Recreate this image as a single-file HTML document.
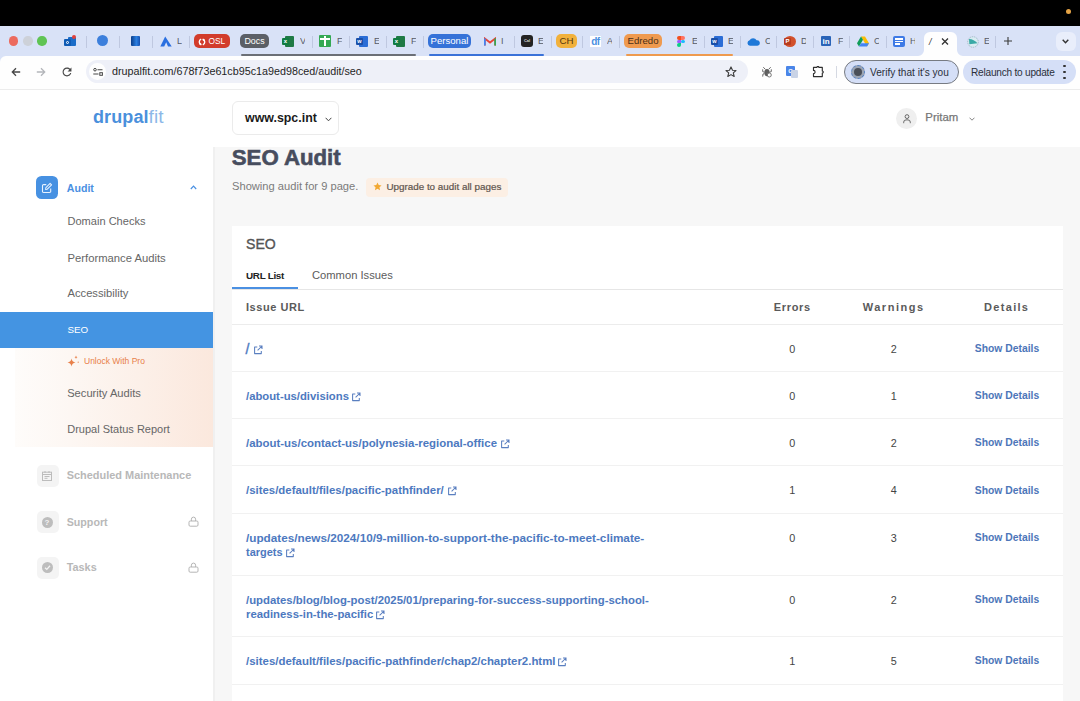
<!DOCTYPE html>
<html><head><meta charset="utf-8">
<style>
*{margin:0;padding:0;box-sizing:border-box}
html,body{width:1080px;height:701px;overflow:hidden;background:#f7f7f7;font-family:"Liberation Sans",sans-serif}
.a{position:absolute}
svg{display:block}
#topbar{left:0;top:0;width:1080px;height:26px;background:#000}
#tabs{left:0;top:26px;width:1080px;height:30px;background:#d9e2f7}
#toolbar{left:0;top:56px;width:1080px;height:33px;background:#fefefe}
#header{left:0;top:89px;width:1080px;height:58px;background:#fff;border-top:1.5px solid #ececec}
#sidebar{left:0;top:147px;width:213px;height:554px;background:#fff}
#main{left:213px;top:147px;width:867px;height:554px;background:#f7f7f7}
.tl{width:9.4px;height:9.4px;border-radius:50%;top:36.3px}
.sep{width:1px;top:36px;height:12px;background:#bfc8e0}
.pill{top:34px;height:14px;border-radius:5px;font-size:10px;line-height:14px;text-align:center;white-space:nowrap}
.tt{top:35px;font-size:9px;color:#555a66;line-height:13px;width:4.5px;overflow:hidden;white-space:nowrap}
.ul{top:54px;height:2px;border-radius:1px}
.si{left:67.5px;font-size:11.2px;line-height:14px;color:#666;white-space:nowrap}
.sd{left:66.7px;font-size:10.9px;line-height:14px;color:#b8b8b8;font-weight:700;white-space:nowrap}
.ib{left:36.5px;width:22px;height:22px;border-radius:5px;background:#f4f4f4}
</style></head><body>
<div id="topbar" class="a"></div>
<div class="a" style="left:1065.6px;top:8.6px;width:5.4px;height:5.4px;border-radius:50%;background:#e6a446"></div>
<div id="tabs" class="a"></div>
<!-- traffic lights -->
<div class="a tl" style="left:8.7px;background:#ec6a5e"></div>
<div class="a tl" style="left:23.3px;background:#cdd1d9"></div>
<div class="a tl" style="left:37.3px;background:#5fc454"></div>
<!-- outlook -->
<div class="a" style="left:64px;top:36px;width:12px;height:10px">
 <div class="a" style="left:4px;top:1px;width:8px;height:9px;background:#1a6cc8;border-radius:1px"></div>
 <div class="a" style="left:0;top:3px;width:7px;height:7px;background:#0f5bb5;border-radius:1px"></div>
 <div class="a" style="left:2px;top:5px;width:3px;height:3px;border:1px solid #fff;border-radius:50%"></div>
 <div class="a" style="left:8px;top:-1px;width:4px;height:4px;background:#e0403a;border-radius:50%"></div>
</div>
<div class="a sep" style="left:86px"></div>
<div class="a" style="left:97px;top:35px;width:11px;height:11px;border-radius:50%;background:#3c7fdc"></div>
<div class="a sep" style="left:119px"></div>
<div class="a" style="left:131px;top:36px;width:9px;height:10px;background:linear-gradient(90deg,#0a3d8a,#2a7ee0 60%,#1550b0);border-radius:1px"></div>
<div class="a sep" style="left:152px"></div>
<svg class="a" style="left:160px;top:36px" width="12" height="11" viewBox="0 0 12 11"><path d="M5.2 0.5 L0.3 10.5 L4.2 10.5 L6.2 6.3 L8 10.5 L11.7 10.5 Z" fill="#2a6fe0"/></svg>
<div class="a tt" style="left:177px">L</div>
<div class="a sep" style="left:189px"></div>
<div class="a pill" style="left:194px;width:36px;background:#d23c2b"></div><div class="a" style="left:208.5px;top:34px;font-size:8.4px;line-height:14px;color:#fff;white-space:nowrap">OSL</div>
<svg class="a" style="left:197.5px;top:37.5px" width="8" height="8" viewBox="0 0 8 8"><path d="M3.2 1.2 A3 3 0 0 0 3.2 6.8 M4.8 1.2 A3 3 0 0 1 4.8 6.8" stroke="#fff" stroke-width="1.4" fill="none"/><path d="M1 6.3 L3.5 7.2 L3 4.8 Z M7 1.7 L4.5 0.8 L5 3.2 Z" fill="#fff"/></svg>
<div class="a pill" style="left:240px;width:29px;background:#5b5f66;color:#fff;font-size:8.9px">Docs</div>
<!-- excel -->
<div class="a" style="left:282px;top:36px;width:12px;height:11px">
 <div class="a" style="left:3px;top:0;width:9px;height:11px;background:#1f7a45;border-radius:1px"></div>
 <div class="a" style="left:0;top:2px;width:7px;height:7px;background:#107c41;border-radius:1px;color:#fff;font-size:6px;line-height:7px;text-align:center;font-weight:700">x</div>
</div>
<div class="a tt" style="left:300px">V</div>
<div class="a sep" style="left:312px"></div>
<div class="a" style="left:319px;top:35px;width:12px;height:12px;background:#34a853;border-radius:1px">
 <div class="a" style="left:5px;top:1px;width:2px;height:10px;background:#fff"></div>
 <div class="a" style="left:1px;top:3px;width:10px;height:2px;background:#fff"></div>
</div>
<div class="a tt" style="left:337px">F</div>
<div class="a sep" style="left:349px"></div>
<!-- word -->
<div class="a" style="left:356px;top:36px;width:12px;height:11px">
 <div class="a" style="left:3px;top:0;width:9px;height:11px;background:#2b6dd6;border-radius:1px"></div>
 <div class="a" style="left:0;top:2px;width:7px;height:7px;background:#1a4fa8;border-radius:1px;color:#fff;font-size:5.5px;line-height:7px;text-align:center;font-weight:700">w</div>
</div>
<div class="a tt" style="left:374px">E</div>
<div class="a sep" style="left:386px"></div>
<div class="a" style="left:393px;top:36px;width:12px;height:11px">
 <div class="a" style="left:3px;top:0;width:9px;height:11px;background:#1f7a45;border-radius:1px"></div>
 <div class="a" style="left:0;top:2px;width:7px;height:7px;background:#107c41;border-radius:1px;color:#fff;font-size:6px;line-height:7px;text-align:center;font-weight:700">x</div>
</div>
<div class="a tt" style="left:411px">F</div>
<div class="a sep" style="left:423px"></div>
<div class="a pill" style="left:428px;width:43px;background:#3572d8;color:#fff;font-size:9.6px">Personal</div>
<!-- gmail -->
<svg class="a" style="left:484px;top:37px" width="12" height="9" viewBox="0 0 12 9"><path d="M0.8 8.5 V1.5 L6 5.5 L11.2 1.5 V8.5" stroke="#ea4335" stroke-width="1.8" fill="none"/><path d="M0.8 8.5 V1.5" stroke="#4285f4" stroke-width="1.8"/><path d="M11.2 8.5 V1.5" stroke="#34a853" stroke-width="1.8"/></svg>
<div class="a tt" style="left:501px">I</div>
<div class="a sep" style="left:514px"></div>
<div class="a" style="left:521px;top:35px;width:12px;height:12px;background:#232323;border-radius:3px;color:#ddd;font-size:4px;line-height:12px;text-align:center;font-weight:700">Cal</div>
<div class="a tt" style="left:538px">E</div>
<div class="a sep" style="left:551px"></div>
<div class="a pill" style="left:556px;width:21px;background:#f1b13c;color:#54380f;font-size:9.7px">CH</div>
<div class="a sep" style="left:582px"></div>
<div class="a" style="left:590px;top:36px;width:11px;height:11px;background:#fff;color:#4a90e2;font-size:10px;line-height:11px;font-weight:700;text-align:center;letter-spacing:-0.5px">df</div>
<div class="a tt" style="left:607px">A</div>
<div class="a sep" style="left:619px"></div>
<div class="a pill" style="left:624px;width:38px;background:#ef9a4f;color:#4a2f18;font-size:9.6px">Edredo</div>
<!-- figma -->
<div class="a" style="left:677px;top:36px;width:8px;height:11px">
 <div class="a" style="left:0;top:0;width:4px;height:3.6px;background:#f24e1e;border-radius:2px 0 0 2px"></div>
 <div class="a" style="left:4px;top:0;width:4px;height:3.6px;background:#ff7262;border-radius:0 2px 2px 0"></div>
 <div class="a" style="left:0;top:3.6px;width:4px;height:3.6px;background:#a259ff;border-radius:2px 0 0 2px"></div>
 <div class="a" style="left:4px;top:3.6px;width:4px;height:3.6px;background:#1abcfe;border-radius:50%"></div>
 <div class="a" style="left:0;top:7.2px;width:4px;height:3.8px;background:#0acf83;border-radius:2px 0 2px 2px"></div>
</div>
<div class="a tt" style="left:692px">E</div>
<div class="a sep" style="left:704px"></div>
<div class="a" style="left:711px;top:36px;width:12px;height:11px">
 <div class="a" style="left:3px;top:0;width:9px;height:11px;background:#2b6dd6;border-radius:1px"></div>
 <div class="a" style="left:0;top:2px;width:7px;height:7px;background:#1a4fa8;border-radius:1px;color:#fff;font-size:5.5px;line-height:7px;text-align:center;font-weight:700">w</div>
</div>
<div class="a tt" style="left:728px">E</div>
<div class="a sep" style="left:740px"></div>
<svg class="a" style="left:747px;top:38px" width="13" height="8" viewBox="0 0 13 8"><path d="M3 7.8 A2.8 2.8 0 0 1 2.6 2.3 A4 4 0 0 1 9.6 2.2 A2.8 2.8 0 0 1 10.4 7.8 Z" fill="#1e78d8"/></svg>
<div class="a tt" style="left:765px">C</div>
<div class="a sep" style="left:776px"></div>
<div class="a" style="left:784px;top:36px;width:12px;height:11px;border-radius:50%;background:#d2502b"></div>
<div class="a" style="left:784px;top:38px;width:7px;height:7px;background:#b83c1e;border-radius:1px;color:#fff;font-size:6px;line-height:7px;font-weight:700;text-align:center">P</div>
<div class="a tt" style="left:801px">D</div>
<div class="a sep" style="left:813px"></div>
<div class="a" style="left:821px;top:36px;width:10px;height:10px;background:#2a64b8;border-radius:1px;color:#fff;font-size:8px;line-height:11px;font-weight:700;text-align:center">in</div>
<div class="a tt" style="left:838px">F</div>
<div class="a sep" style="left:849px"></div>
<svg class="a" style="left:857px;top:36px" width="12" height="11" viewBox="0 0 12 11"><path d="M4 0.5 H8 L12 7.3 L10 10.5 Z" fill="#fbbc04"/><path d="M4 0.5 L0 7.3 L2 10.5 L6 3.7 Z" fill="#0f9d58"/><path d="M2 10.5 H10 L12 7.3 H4 Z" fill="#4285f4"/></svg>
<div class="a tt" style="left:874px">C</div>
<div class="a sep" style="left:886px"></div>
<div class="a" style="left:893px;top:36px;width:12px;height:11px;background:#3e7ae6;border-radius:2px">
 <div class="a" style="left:2px;top:2px;width:8px;height:1.5px;background:#fff"></div>
 <div class="a" style="left:2px;top:4.7px;width:8px;height:1.5px;background:#fff"></div>
 <div class="a" style="left:2px;top:7.4px;width:5px;height:1.5px;background:#fff"></div>
</div>
<div class="a tt" style="left:910px">H</div>
<!-- active tab -->
<svg class="a" style="left:918px;top:31px" width="45" height="25" viewBox="0 0 45 25"><path d="M0 25 A6 6 0 0 0 6 19 V7 A6 6 0 0 1 12 1 H33 A6 6 0 0 1 39 7 V19 A6 6 0 0 0 45 25 Z" fill="#fefefe"/></svg>
<div class="a" style="left:929px;top:37px;font-size:9px;color:#333;font-style:italic">/</div>
<svg class="a" style="left:941px;top:38px" width="8" height="7" viewBox="0 0 8 7"><path d="M1 0.5 L7 6.5 M7 0.5 L1 6.5" stroke="#333" stroke-width="1.3"/></svg>
<svg class="a" style="left:966.5px;top:35.5px" width="12" height="12" viewBox="0 0 12 12"><circle cx="6" cy="6" r="5.3" fill="#d9ecf2" stroke="#9ab0bf" stroke-width="0.8" stroke-dasharray="1.5 0.8"/><path d="M2 3 Q7 3.2 10.5 7.3 L2.3 8.2 Z" fill="#39a9a6"/></svg>
<div class="a tt" style="left:984px">E</div>
<div class="a sep" style="left:995px"></div>
<svg class="a" style="left:1003.5px;top:37px" width="8" height="8" viewBox="0 0 8 8"><path d="M4 0 V8 M0 4 H8" stroke="#3a3a3a" stroke-width="1.1"/></svg>
<div class="a" style="left:1056px;top:32px;width:20px;height:19px;border-radius:6px;background:#e9eefb"></div>
<svg class="a" style="left:1062px;top:39px" width="7" height="5" viewBox="0 0 7 5"><path d="M0.7 0.8 L3.5 3.8 L6.3 0.8" stroke="#333" stroke-width="1.4" fill="none"/></svg>
<!-- group underlines -->
<div class="a ul" style="left:241px;width:175px;background:#6b6f76"></div>
<div class="a ul" style="left:429px;width:115px;background:#3a72d8"></div>
<div class="a ul" style="left:626px;width:107px;background:#ee9a4e"></div>

<div id="toolbar" class="a"></div>
<svg class="a" style="left:0;top:56px" width="6" height="6" viewBox="0 0 6 6"><path d="M0 0 H6 A6 6 0 0 0 0 6 Z" fill="#d9e2f7"/></svg>
<svg class="a" style="left:11px;top:67px" width="10" height="10" viewBox="0 0 10 10"><path d="M9.2 5 H1.5 M5 1.3 L1.3 5 L5 8.7" stroke="#474747" stroke-width="1.3" fill="none"/></svg>
<svg class="a" style="left:36px;top:67px" width="10" height="10" viewBox="0 0 10 10"><path d="M0.8 5 H8.5 M5 1.3 L8.7 5 L5 8.7" stroke="#b4b6ba" stroke-width="1.3" fill="none"/></svg>
<svg class="a" style="left:62px;top:67px" width="10" height="10" viewBox="3 3 18 18"><path d="M17.65 6.35C16.2 4.9 14.21 4 12 4c-4.42 0-7.99 3.58-7.99 8s3.57 8 7.99 8c3.73 0 6.84-2.55 7.73-6h-2.08c-.82 2.33-3.04 4-5.65 4-3.31 0-6-2.69-6-6s2.69-6 6-6c1.66 0 3.14.69 4.22 1.78L13 11h7V4l-2.35 2.35z" fill="#474747"/></svg>
<div class="a" style="left:86px;top:60px;width:662px;height:23px;border-radius:12px;background:#eef0f8"></div>
<div class="a" style="left:89px;top:63px;width:17px;height:17px;border-radius:50%;background:#fefefe"></div>
<svg class="a" style="left:93px;top:68px" width="10" height="8" viewBox="0 0 10 8"><circle cx="2" cy="1.7" r="1.3" stroke="#474747" stroke-width="1" fill="none"/><path d="M4.5 1.7 H9.5 M0.3 6 H5.5" stroke="#474747" stroke-width="1.1"/><rect x="6.8" y="4.7" width="2.6" height="2.6" stroke="#474747" stroke-width="1" fill="none"/></svg>
<div class="a" style="left:112px;top:65px;font-size:10.76px;line-height:13px;color:#1f1f1f;white-space:nowrap">drupalfit.com/678f73e61cb95c1a9ed98ced/audit/seo</div>
<svg class="a" style="left:725px;top:66px" width="12" height="12" viewBox="0 0 12 12"><path d="M6 0.9 L7.5 4.2 L11 4.5 L8.3 6.8 L9.2 10.5 L6 8.6 L2.8 10.5 L3.7 6.8 L1 4.5 L4.5 4.2 Z" stroke="#3c3c3c" stroke-width="1.1" fill="none" stroke-linejoin="round"/></svg>
<svg class="a" style="left:760.5px;top:66px" width="12" height="12" viewBox="0 0 12 12"><path d="M2.3 1.2 L4.3 3.3 M9.7 1.2 L7.7 3.3" stroke="#6a6a6a" stroke-width="1"/><ellipse cx="6" cy="6.6" rx="2.7" ry="3.6" fill="#5f5f5f"/><path d="M1.7 3.3 V5.6 L3.4 6.2 M10.3 3.3 V5.6 L8.6 6.2 M1.7 10.6 L2 8 L3.4 7.6" stroke="#6a6a6a" stroke-width="1" fill="none"/><circle cx="8.3" cy="9" r="2" fill="#fefefe" stroke="#6a6a6a" stroke-width="0.9"/></svg>
<div class="a" style="left:786px;top:66px;width:9px;height:10px;background:#4a85e8;border-radius:1px;color:#fff;font-size:6px;font-weight:700;line-height:10px;text-align:center">G</div>
<div class="a" style="left:791px;top:70px;width:7px;height:8px;background:#c9d3e6;border-radius:1px"></div>
<svg class="a" style="left:812px;top:66px" width="13" height="12" viewBox="0 0 13 12"><path d="M1.5 1.3 H5 A0.9 0.9 0 0 1 6.8 1.3 H10.3 V5 A1 1 0 0 1 10.3 7 V10.6 H1.5 V7.6 A1.4 1.4 0 0 0 1.5 4.4 Z" stroke="#2f2f2f" stroke-width="1.15" fill="none" stroke-linejoin="round"/></svg>
<div class="a" style="left:836px;top:66px;width:1px;height:12px;background:#d5d9e2"></div>
<div class="a" style="left:844px;top:60px;width:115px;height:24px;border-radius:12px;background:#d5dff7;border:1px solid #777b82"></div>
<div class="a" style="left:851px;top:65px;width:14px;height:14px;border-radius:50%;border:1px dashed #5580c0;background:#9aa4b4"></div>
<div class="a" style="left:854px;top:68px;width:8px;height:8px;border-radius:50%;background:#4a4f58"></div>
<div class="a" style="left:870px;top:65.5px;font-size:10.1px;line-height:13px;color:#2a2f3a;white-space:nowrap">Verify that it's you</div>
<div class="a" style="left:963px;top:60px;width:113px;height:24px;border-radius:12px;background:#d5dff7"></div>
<div class="a" style="left:971px;top:65.5px;font-size:10.1px;line-height:13px;color:#2a2f3a;white-space:nowrap;letter-spacing:-0.22px">Relaunch to update</div>
<div class="a" style="left:1063.3px;top:65.0px;width:2.4px;height:2.4px;border-radius:50%;background:#333"></div>
<div class="a" style="left:1063.3px;top:71.0px;width:2.4px;height:2.4px;border-radius:50%;background:#333"></div>
<div class="a" style="left:1063.3px;top:77.0px;width:2.4px;height:2.4px;border-radius:50%;background:#333"></div>
<div id="header" class="a"></div>
<div class="a" style="left:232px;top:101px;width:107px;height:34px;border:1px solid #ebebeb;border-radius:6px;background:#fff"></div>
<svg class="a" style="left:325px;top:117px" width="7" height="5" viewBox="0 0 7 5"><path d="M0.6 0.8 L3.5 3.8 L6.4 0.8" stroke="#444" stroke-width="1" fill="none"/></svg>
<div class="a" style="left:896px;top:107.5px;width:21px;height:21px;border-radius:50%;background:#efefef"></div>
<svg class="a" style="left:902.5px;top:113.5px" width="8" height="10" viewBox="0 0 8 10"><circle cx="4" cy="2.6" r="1.9" stroke="#666" stroke-width="1" fill="none"/><path d="M0.7 9.2 V8.2 A2.3 2.3 0 0 1 3 5.9 H5 A2.3 2.3 0 0 1 7.3 8.2 V9.2" stroke="#666" stroke-width="1" fill="none"/></svg>
<svg class="a" style="left:968.5px;top:117px" width="6" height="4" viewBox="0 0 6 4"><path d="M0.5 0.7 L3 3.2 L5.5 0.7" stroke="#777" stroke-width="0.9" fill="none"/></svg>
<div id="sidebar" class="a"></div>
<div class="a" style="left:36px;top:176.2px;width:22.4px;height:22.6px;border-radius:5.5px;background:#4791e2"></div>
<svg class="a" style="left:41.2px;top:182px" width="12" height="12" viewBox="0 0 12 12"><path d="M5.3 2.6 H2.6 A1.1 1.1 0 0 0 1.5 3.7 V9.4 A1.1 1.1 0 0 0 2.6 10.5 H8.6 A1.1 1.1 0 0 0 9.7 9.4 V6.6" stroke="#e8f2ff" stroke-width="1.1" fill="none"/><path d="M9.1 1.4 L10.6 2.9 L6.3 7.2 L4.6 7.5 L4.9 5.6 Z" stroke="#e8f2ff" stroke-width="1.05" fill="none" stroke-linejoin="round"/></svg>
<svg class="a" style="left:189.5px;top:185px" width="7" height="5" viewBox="0 0 7 5"><path d="M0.8 4 L3.5 1.2 L6.2 4" stroke="#4a90e2" stroke-width="1.2" fill="none"/></svg>
<div class="a" style="left:0;top:312px;width:213px;height:35.5px;background:#4494e2"></div>
<div class="a" style="left:0;top:347.5px;width:213px;height:99.5px;background:linear-gradient(90deg,rgba(255,255,255,0) 0px,rgba(255,255,255,0) 15px,#fefcfa 15.5px,#fdf7f3 70px,#fbe8dd 213px)"></div>
<svg class="a" style="left:67px;top:355px" width="12" height="12" viewBox="0 0 12 12"><path d="M4.5 3.5 Q5 7 8.5 7.5 Q5 8 4.5 11.5 Q4 8 0.5 7.5 Q4 7 4.5 3.5 Z" fill="#e8804a"/><path d="M9 0.5 Q9.2 2 10.5 2.2 Q9.2 2.4 9 3.9 Q8.8 2.4 7.5 2.2 Q8.8 2 9 0.5 Z" fill="#e8804a"/><circle cx="11.2" cy="7.2" r="0.6" fill="#e8804a"/></svg>
<div class="a ib" style="top:465px"></div>
<svg class="a" style="left:41px;top:470px" width="12" height="12" viewBox="0 0 12 12"><rect x="1.5" y="2.2" width="9" height="8.3" stroke="#bcbcbc" stroke-width="1" fill="none"/><path d="M1.5 4.5 H10.5 M4 1 V3 M8 1 V3 M3.5 6.5 H8.5 M3.5 8.3 H6.5" stroke="#bcbcbc" stroke-width="1"/></svg>
<div class="a ib" style="top:511px"></div>
<div class="a" style="left:41.5px;top:516.5px;width:11px;height:11px;border-radius:50%;background:#bdbdbd;color:#f3f3f3;font-size:8px;line-height:11px;text-align:center;font-weight:700">?</div>
<svg class="a" style="left:188px;top:516px" width="11" height="11" viewBox="0 0 11 11"><path d="M3.4 5 V3.2 A2.1 2.1 0 0 1 7.6 3.2 V5" stroke="#b5b5b5" stroke-width="1" fill="none"/><rect x="1" y="5" width="9" height="5.2" rx="1.2" stroke="#b5b5b5" stroke-width="1" fill="none"/></svg>
<div class="a ib" style="top:556.5px"></div>
<div class="a" style="left:41.5px;top:562px;width:11px;height:11px;border-radius:50%;background:#bdbdbd"></div>
<svg class="a" style="left:41.5px;top:562px" width="11" height="11" viewBox="0 0 11 11"><path d="M3 5.7 L4.8 7.4 L8 3.8" stroke="#f3f3f3" stroke-width="1.3" fill="none"/></svg>
<svg class="a" style="left:188px;top:562px" width="11" height="11" viewBox="0 0 11 11"><path d="M3.4 5 V3.2 A2.1 2.1 0 0 1 7.6 3.2 V5" stroke="#b5b5b5" stroke-width="1" fill="none"/><rect x="1" y="5" width="9" height="5.2" rx="1.2" stroke="#b5b5b5" stroke-width="1" fill="none"/></svg>
<div id="main" class="a"></div>
<div class="a" style="left:213px;top:147px;width:2px;height:554px;background:#f0f0f0"></div>
<div class="a" style="left:231.80px;top:143.10px;font-size:22.2px;line-height:29px;font-weight:700;color:#474d5e;white-space:nowrap;-webkit-text-stroke:0.6px #474d5e">SEO Audit</div>
<div class="a" style="left:232.00px;top:179.13px;font-size:11.15px;line-height:15px;font-weight:400;color:#7b7b7b;white-space:nowrap;">Showing audit for 9 page.</div>
<div class="a" style="left:366px;top:178px;width:142px;height:19px;border-radius:4px;background:#fcefe4"></div>
<svg class="a" style="left:373px;top:182px" width="9" height="9" viewBox="0 0 12 12"><path d="M6 0.6 L7.6 4.1 L11.4 4.5 L8.6 7.1 L9.4 10.9 L6 9 L2.6 10.9 L3.4 7.1 L0.6 4.5 L4.4 4.1 Z" fill="#f2a832"/></svg>
<div class="a" style="left:386.40px;top:180.39px;font-size:9.85px;line-height:13px;font-weight:400;color:#5f554e;white-space:nowrap;-webkit-text-stroke:0.2px #5f554e">Upgrade to audit all pages</div>
<div class="a" style="left:232px;top:226px;width:831px;height:480px;background:#fff"></div>
<div class="a" style="left:246.00px;top:234.81px;font-size:14.1px;line-height:19px;font-weight:400;color:#555;white-space:nowrap;-webkit-text-stroke:0.35px #555">SEO</div>
<div class="a" style="left:246.00px;top:268.97px;font-size:9.9px;line-height:13px;font-weight:700;color:#222;white-space:nowrap;letter-spacing:-0.3px">URL List</div>
<div class="a" style="left:312.00px;top:267.52px;font-size:11.2px;line-height:15px;font-weight:400;color:#5c5c5c;white-space:nowrap;">Common Issues</div>
<div class="a" style="left:232px;top:288.5px;width:831px;height:1px;background:#e6e6e6"></div>
<div class="a" style="left:232px;top:287px;width:66px;height:2px;background:#4a90e2"></div>
<div class="a" style="left:246.00px;top:299.59px;font-size:11.0px;line-height:15px;font-weight:700;color:#5a5a5a;white-space:nowrap;letter-spacing:0.55px">Issue URL</div>
<div class="a" style="left:642.30px;width:300px;text-align:center;top:299.59px;font-size:11.0px;line-height:15px;font-weight:700;color:#5a5a5a;white-space:nowrap;letter-spacing:0.65px">Errors</div>
<div class="a" style="left:743.70px;width:300px;text-align:center;top:299.59px;font-size:11.0px;line-height:15px;font-weight:700;color:#5a5a5a;white-space:nowrap;letter-spacing:1.55px">Warnings</div>
<div class="a" style="left:856.70px;width:300px;text-align:center;top:299.59px;font-size:11.0px;line-height:15px;font-weight:700;color:#5a5a5a;white-space:nowrap;letter-spacing:1.3px">Details</div>
<div class="a" style="left:232px;top:323.5px;width:831px;height:1px;background:#ececec"></div>
<div class="a" style="left:245.50px;top:340.15px;font-size:14.0px;line-height:19px;font-weight:400;color:#4d79c0;white-space:nowrap;-webkit-text-stroke:0.4px #4d79c0">/</div>
<div class="a" style="left:642.30px;width:300px;text-align:center;top:341.76px;font-size:10.8px;line-height:15px;font-weight:400;color:#444;white-space:nowrap;">0</div>
<div class="a" style="left:743.70px;width:300px;text-align:center;top:341.76px;font-size:10.8px;line-height:15px;font-weight:400;color:#444;white-space:nowrap;">2</div>
<div class="a" style="left:857.00px;width:300px;text-align:center;top:342.22px;font-size:10.33px;line-height:14px;font-weight:700;color:#4d76b9;white-space:nowrap;">Show Details</div>
<div class="a" style="left:232px;top:370.5px;width:831px;height:1px;background:#f1f1f1"></div>
<div class="a" style="left:246.00px;top:388.58px;font-size:11.3px;line-height:15px;font-weight:700;color:#4d79c0;white-space:nowrap;">/about-us/divisions</div>
<div class="a" style="left:642.30px;width:300px;text-align:center;top:388.76px;font-size:10.8px;line-height:15px;font-weight:400;color:#444;white-space:nowrap;">0</div>
<div class="a" style="left:743.70px;width:300px;text-align:center;top:388.76px;font-size:10.8px;line-height:15px;font-weight:400;color:#444;white-space:nowrap;">1</div>
<div class="a" style="left:857.00px;width:300px;text-align:center;top:389.22px;font-size:10.33px;line-height:14px;font-weight:700;color:#4d76b9;white-space:nowrap;">Show Details</div>
<div class="a" style="left:232px;top:417.5px;width:831px;height:1px;background:#f1f1f1"></div>
<div class="a" style="left:246.00px;top:435.53px;font-size:11.45px;line-height:15px;font-weight:700;color:#4d79c0;white-space:nowrap;">/about-us/contact-us/polynesia-regional-office</div>
<div class="a" style="left:642.30px;width:300px;text-align:center;top:435.76px;font-size:10.8px;line-height:15px;font-weight:400;color:#444;white-space:nowrap;">0</div>
<div class="a" style="left:743.70px;width:300px;text-align:center;top:435.76px;font-size:10.8px;line-height:15px;font-weight:400;color:#444;white-space:nowrap;">2</div>
<div class="a" style="left:857.00px;width:300px;text-align:center;top:436.22px;font-size:10.33px;line-height:14px;font-weight:700;color:#4d76b9;white-space:nowrap;">Show Details</div>
<div class="a" style="left:232px;top:465.0px;width:831px;height:1px;background:#f1f1f1"></div>
<div class="a" style="left:246.00px;top:483.04px;font-size:11.42px;line-height:15px;font-weight:700;color:#4d79c0;white-space:nowrap;">/sites/default/files/pacific-pathfinder/</div>
<div class="a" style="left:642.30px;width:300px;text-align:center;top:483.26px;font-size:10.8px;line-height:15px;font-weight:400;color:#444;white-space:nowrap;">1</div>
<div class="a" style="left:743.70px;width:300px;text-align:center;top:483.26px;font-size:10.8px;line-height:15px;font-weight:400;color:#444;white-space:nowrap;">4</div>
<div class="a" style="left:857.00px;width:300px;text-align:center;top:483.72px;font-size:10.33px;line-height:14px;font-weight:700;color:#4d76b9;white-space:nowrap;">Show Details</div>
<div class="a" style="left:232px;top:512.5px;width:831px;height:1px;background:#f1f1f1"></div>
<div class="a" style="left:246.00px;top:529.93px;font-size:11.75px;line-height:16px;font-weight:700;color:#4d79c0;white-space:nowrap;">/updates/news/2024/10/9-million-to-support-the-pacific-to-meet-climate-</div>
<div class="a" style="left:246.00px;top:545.30px;font-size:10.95px;line-height:15px;font-weight:700;color:#4d79c0;white-space:nowrap;">targets</div>
<div class="a" style="left:642.30px;width:300px;text-align:center;top:530.76px;font-size:10.8px;line-height:15px;font-weight:400;color:#444;white-space:nowrap;">0</div>
<div class="a" style="left:743.70px;width:300px;text-align:center;top:530.76px;font-size:10.8px;line-height:15px;font-weight:400;color:#444;white-space:nowrap;">3</div>
<div class="a" style="left:857.00px;width:300px;text-align:center;top:531.22px;font-size:10.33px;line-height:14px;font-weight:700;color:#4d76b9;white-space:nowrap;">Show Details</div>
<div class="a" style="left:232px;top:574.5px;width:831px;height:1px;background:#f1f1f1"></div>
<div class="a" style="left:246.00px;top:592.56px;font-size:11.35px;line-height:15px;font-weight:700;color:#4d79c0;white-space:nowrap;">/updates/blog/blog-post/2025/01/preparing-for-success-supporting-school-</div>
<div class="a" style="left:246.00px;top:607.16px;font-size:11.35px;line-height:15px;font-weight:700;color:#4d79c0;white-space:nowrap;">readiness-in-the-pacific</div>
<div class="a" style="left:642.30px;width:300px;text-align:center;top:592.76px;font-size:10.8px;line-height:15px;font-weight:400;color:#444;white-space:nowrap;">0</div>
<div class="a" style="left:743.70px;width:300px;text-align:center;top:592.76px;font-size:10.8px;line-height:15px;font-weight:400;color:#444;white-space:nowrap;">2</div>
<div class="a" style="left:857.00px;width:300px;text-align:center;top:593.22px;font-size:10.33px;line-height:14px;font-weight:700;color:#4d76b9;white-space:nowrap;">Show Details</div>
<div class="a" style="left:232px;top:635.5px;width:831px;height:1px;background:#f1f1f1"></div>
<div class="a" style="left:246.00px;top:653.53px;font-size:11.45px;line-height:15px;font-weight:700;color:#4d79c0;white-space:nowrap;">/sites/default/files/pacific-pathfinder/chap2/chapter2.html</div>
<div class="a" style="left:642.30px;width:300px;text-align:center;top:653.76px;font-size:10.8px;line-height:15px;font-weight:400;color:#444;white-space:nowrap;">1</div>
<div class="a" style="left:743.70px;width:300px;text-align:center;top:653.76px;font-size:10.8px;line-height:15px;font-weight:400;color:#444;white-space:nowrap;">5</div>
<div class="a" style="left:857.00px;width:300px;text-align:center;top:654.22px;font-size:10.33px;line-height:14px;font-weight:700;color:#4d76b9;white-space:nowrap;">Show Details</div>
<div class="a" style="left:232px;top:683.5px;width:831px;height:1px;background:#f1f1f1"></div>
<svg class="a" style="left:252.6px;top:344.6px" width="10" height="10" viewBox="0 0 10 10"><path d="M4.3 1.9 H1.6 V8.6 H8.3 V5.9" stroke="#5a7fc0" stroke-width="1.05" fill="none" stroke-linejoin="round"/><path d="M6 1 H9 V4 M9 1 L4.6 5.4" stroke="#5a7fc0" stroke-width="1.05" fill="none"/></svg>
<svg class="a" style="left:350.7px;top:391.5px" width="10" height="10" viewBox="0 0 10 10"><path d="M4.3 1.9 H1.6 V8.6 H8.3 V5.9" stroke="#5a7fc0" stroke-width="1.05" fill="none" stroke-linejoin="round"/><path d="M6 1 H9 V4 M9 1 L4.6 5.4" stroke="#5a7fc0" stroke-width="1.05" fill="none"/></svg>
<svg class="a" style="left:500.2px;top:438.6px" width="10" height="10" viewBox="0 0 10 10"><path d="M4.3 1.9 H1.6 V8.6 H8.3 V5.9" stroke="#5a7fc0" stroke-width="1.05" fill="none" stroke-linejoin="round"/><path d="M6 1 H9 V4 M9 1 L4.6 5.4" stroke="#5a7fc0" stroke-width="1.05" fill="none"/></svg>
<svg class="a" style="left:446.8px;top:485.8px" width="10" height="10" viewBox="0 0 10 10"><path d="M4.3 1.9 H1.6 V8.6 H8.3 V5.9" stroke="#5a7fc0" stroke-width="1.05" fill="none" stroke-linejoin="round"/><path d="M6 1 H9 V4 M9 1 L4.6 5.4" stroke="#5a7fc0" stroke-width="1.05" fill="none"/></svg>
<svg class="a" style="left:284.6px;top:548.2px" width="10" height="10" viewBox="0 0 10 10"><path d="M4.3 1.9 H1.6 V8.6 H8.3 V5.9" stroke="#5a7fc0" stroke-width="1.05" fill="none" stroke-linejoin="round"/><path d="M6 1 H9 V4 M9 1 L4.6 5.4" stroke="#5a7fc0" stroke-width="1.05" fill="none"/></svg>
<svg class="a" style="left:375.4px;top:610.4px" width="10" height="10" viewBox="0 0 10 10"><path d="M4.3 1.9 H1.6 V8.6 H8.3 V5.9" stroke="#5a7fc0" stroke-width="1.05" fill="none" stroke-linejoin="round"/><path d="M6 1 H9 V4 M9 1 L4.6 5.4" stroke="#5a7fc0" stroke-width="1.05" fill="none"/></svg>
<svg class="a" style="left:556.7px;top:656.8px" width="10" height="10" viewBox="0 0 10 10"><path d="M4.3 1.9 H1.6 V8.6 H8.3 V5.9" stroke="#5a7fc0" stroke-width="1.05" fill="none" stroke-linejoin="round"/><path d="M6 1 H9 V4 M9 1 L4.6 5.4" stroke="#5a7fc0" stroke-width="1.05" fill="none"/></svg>
<div class="a" style="left:93.00px;top:104.56px;font-size:18px;line-height:24px;font-weight:700;color:#4a90dc;white-space:nowrap;letter-spacing:0.1px"><span style="color:#4a90dc;font-weight:700">drupal</span><span style="color:#8cb8e8;font-weight:400;font-size:19px">fit</span></div>
<div class="a" style="left:245.00px;top:110.20px;font-size:12.4px;line-height:17px;font-weight:700;color:#1a1a1a;white-space:nowrap;">www.spc.int</div>
<div class="a" style="left:925.30px;top:110.35px;font-size:11.4px;line-height:15px;font-weight:400;color:#777;white-space:nowrap;-webkit-text-stroke:0.25px #777">Pritam</div>
<div class="a" style="left:66.80px;top:180.62px;font-size:10.6px;line-height:14px;font-weight:700;color:#4a90e2;white-space:nowrap;">Audit</div>
<div class="a" style="left:67.50px;top:214.47px;font-size:11.05px;line-height:15px;font-weight:400;color:#666;white-space:nowrap;">Domain Checks</div>
<div class="a" style="left:67.50px;top:250.60px;font-size:11.25px;line-height:15px;font-weight:400;color:#666;white-space:nowrap;">Performance Audits</div>
<div class="a" style="left:67.50px;top:285.82px;font-size:11.2px;line-height:15px;font-weight:400;color:#666;white-space:nowrap;">Accessibility</div>
<div class="a" style="left:67.50px;top:323.20px;font-size:9.8px;line-height:13px;font-weight:400;color:#fff;white-space:nowrap;">SEO</div>
<div class="a" style="left:84.00px;top:355.35px;font-size:8.5px;line-height:12px;font-weight:400;color:#e8804a;white-space:nowrap;">Unlock With Pro</div>
<div class="a" style="left:67.20px;top:386.33px;font-size:11.15px;line-height:15px;font-weight:400;color:#666;white-space:nowrap;">Security Audits</div>
<div class="a" style="left:67.20px;top:422.19px;font-size:11.0px;line-height:15px;font-weight:400;color:#666;white-space:nowrap;">Drupal Status Report</div>
<div class="a" style="left:66.70px;top:468.40px;font-size:10.95px;line-height:15px;font-weight:700;color:#b8b8b8;white-space:nowrap;">Scheduled Maintenance</div>
<div class="a" style="left:66.70px;top:515.09px;font-size:10.7px;line-height:14px;font-weight:700;color:#b8b8b8;white-space:nowrap;">Support</div>
<div class="a" style="left:66.70px;top:559.93px;font-size:10.86px;line-height:15px;font-weight:700;color:#b8b8b8;white-space:nowrap;">Tasks</div>

</body></html>
